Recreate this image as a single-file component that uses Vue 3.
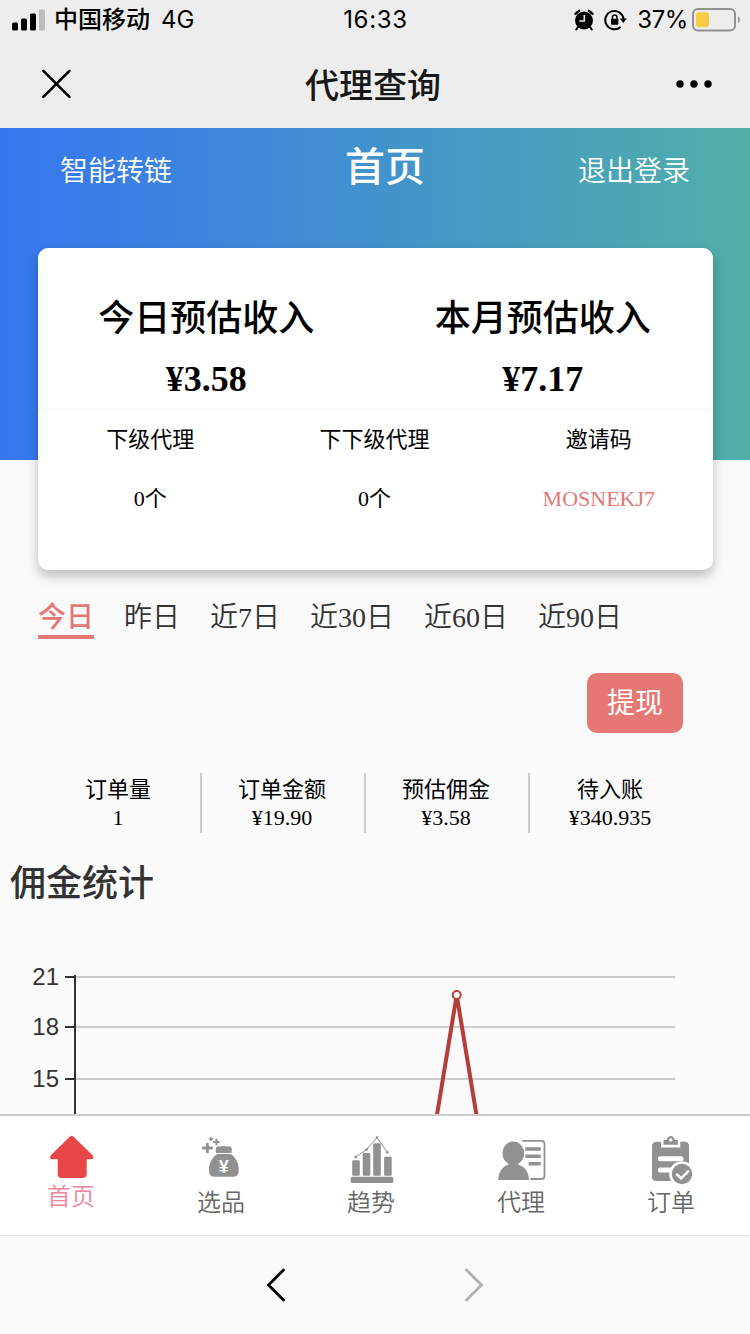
<script setup>
import { ref } from 'vue'

// income card
const income = ref([
  { name: '今日预估收入', value: '¥3.58' },
  { name: '本月预估收入', value: '¥7.17' }
])
const agents = ref([
  { name: '下级代理', value: '0个' },
  { name: '下下级代理', value: '0个' },
  { name: '邀请码', value: 'MOSNEKJ7', code: true }
])

// periods
const periods = ['今日', '昨日', '近7日', '近30日', '近60日', '近90日']
const selectedPeriod = ref('今日')

const stats = ref([
  { name: '订单量', value: '1' },
  { name: '订单金额', value: '¥19.90' },
  { name: '预估佣金', value: '¥3.58' },
  { name: '待入账', value: '¥340.935' }
])

// chart axis
const ticks = [
  { label: '21', y: 37 },
  { label: '18', y: 87 },
  { label: '15', y: 139 }
]

const tabs = [
  { key: 'home', name: '首页' },
  { key: 'goods', name: '选品' },
  { key: 'trend', name: '趋势' },
  { key: 'agent', name: '代理' },
  { key: 'order', name: '订单' }
]
const selectedTab = ref('home')
</script>

<template>
  <div class="page">
    <div class="status-bar">
      <div class="status-left">
        <svg class="signal" width="34" height="22" viewBox="0 0 34 22">
          <rect x="0" y="13.5" width="6" height="8" rx="1.6" />
          <rect x="9" y="9.5" width="6" height="12" rx="1.6" />
          <rect x="18" y="4.5" width="6" height="17" rx="1.6" />
          <rect x="27" y="0.5" width="6" height="21" rx="1.6" fill="#bcbcbc" />
        </svg>
        <span class="carrier">中国移动</span>
        <span>4G</span>
      </div>
      <span class="time">16:33</span>
      <div class="status-right">
        <svg class="alarm" width="20" height="22" viewBox="0 0 20 22">
          <circle cx="10" cy="11.5" r="9" />
          <path d="M1.4 4.8L5 1.8M18.6 4.8L15 1.8" stroke="#000" stroke-width="2.4" stroke-linecap="round" />
          <path d="M4 18L2.2 20.5M16 18l1.8 2.5" stroke="#000" stroke-width="2" stroke-linecap="round" />
          <path d="M10.3 6v6H5.2" fill="none" stroke="#ededed" stroke-width="1.6" />
        </svg>
        <svg class="lock" width="24" height="22" viewBox="0 0 24 22">
          <path d="M16.6 18A9.2 9.2 0 1 1 19.6 10" fill="none" stroke="#000" stroke-width="2" />
          <path d="M15.8 9.6h7L19.3 14z" />
          <rect x="7" y="9.8" width="7.4" height="6" rx="0.8" />
          <path d="M8.4 10V8.2a2.3 2.3 0 0 1 4.6 0V10" fill="none" stroke="#000" stroke-width="1.5" />
        </svg>
        <span class="percent">37%</span>
        <svg width="50" height="24" viewBox="0 0 50 24">
          <rect x="1" y="1" width="42" height="21.4" rx="5" fill="none" stroke="#919191" stroke-width="2" />
          <rect x="4" y="4.2" width="13" height="15" rx="2.4" fill="#f7cd45" />
          <path d="M46 8.4c2.4 1 2.4 5.6 0 6.6z" fill="#919191" />
        </svg>
      </div>
    </div>

    <div class="nav-bar">
      <svg class="close" width="30" height="30" viewBox="0 0 30 30">
        <path d="M2.400 1.800l26 26M28.400 1.800l-26 26" fill="none" stroke="#000" stroke-width="2.6" stroke-linecap="round" />
      </svg>
      <span class="nav-title">代理查询</span>
      <svg class="more" width="36" height="8" viewBox="0 0 36 8">
        <circle cx="4" cy="4" r="3.7" />
        <circle cx="18" cy="4" r="3.7" />
        <circle cx="32" cy="4" r="3.7" />
      </svg>
    </div>

    <div class="content">
      <div class="header">
        <span class="link">智能转链</span>
        <span class="title">首页</span>
        <span class="link">退出登录</span>
      </div>

      <div class="card">
        <div class="income-row">
          <div v-for="item in income" :key="item.name" class="income">
            <p>{{ item.name }}</p>
            <p class="money">{{ item.value }}</p>
          </div>
        </div>
        <div class="agent-row">
          <div v-for="item in agents" :key="item.name" class="agent">
            <p>{{ item.name }}</p>
            <p :class="{ code: item.code }">{{ item.value }}</p>
          </div>
        </div>
      </div>

      <div class="periods">
        <span
          v-for="period in periods"
          :key="period"
          :class="{ active: period === selectedPeriod }"
          @click="selectedPeriod = period"
        >{{ period }}</span>
      </div>

      <div class="withdraw-row">
        <button class="withdraw">提现</button>
      </div>

      <div class="stats">
        <div v-for="item in stats" :key="item.name" class="stat">
          <p>{{ item.name }}</p>
          <p>{{ item.value }}</p>
        </div>
      </div>

      <h2 class="chart-title">佣金统计</h2>
      <svg class="chart" width="750" height="420" viewBox="0 0 750 420">
        <g v-for="tick in ticks" :key="tick.label">
          <line x1="76" x2="675" :y1="tick.y" :y2="tick.y" stroke="#ccc" stroke-width="2" />
          <line x1="65" x2="75" :y1="tick.y" :y2="tick.y" stroke="#333" stroke-width="2" />
          <text x="59" :y="tick.y + 8" text-anchor="end">{{ tick.label }}</text>
        </g>
        <line x1="75" x2="75" y1="35" y2="397" stroke="#333" stroke-width="2" />
        <path d="M400.500 397L456.700 55L513 397" fill="none" stroke="#b43f39" stroke-width="4" stroke-linejoin="bevel" />
        <circle cx="456.7" cy="55" r="4" fill="#fff" stroke="#b43f39" stroke-width="2" />
      </svg>
    </div>

    <div class="tab-bar">
      <div
        v-for="tab in tabs"
        :key="tab.key"
        class="tab"
        :class="{ active: tab.key === selectedTab }"
        @click="selectedTab = tab.key"
      >
        <svg v-if="tab.key === 'home'" width="48" height="42" viewBox="0 0 48 42">
          <path d="M23 .5q1.7-1.3 3.4 0L45.6 19.3q2 3.900-1.600 3.900H39.700V38q0 4-4 4H14.700q-4 0-4-4V23.200H5.400q-3.600 0-1.600-3.900z" />
        </svg>
        <svg v-else-if="tab.key === 'goods'" width="48" height="48" viewBox="0 0 48 48">
          <path d="M10.4 7v10M5.100 12h10.600" stroke-width="2.8" />
          <path d="M19.4 2.700v6.600M16.100 6h6.600" stroke-width="2" />
          <path d="M14 1v4M12 3h4" stroke-width="1.5" />
          <path d="M19.200 11.300q2.500-1.600 4.300-.6q3.300-1.600 6.600 0q2.400-1 4.300.8q1.200 3 0 5.600H19.200q-1.200-3 0-5.800z" class="fill" />
          <path d="M20.500 18h13c4.500 2.500 8.400 9 8.200 15.500c0 5-1.700 7.200-5.200 7.200H17.200c-3.500 0-5.200-2.200-5.200-7.200c-.2-6.500 4-13 8.500-15.500z" class="fill" />
          <text x="26.8" y="37" text-anchor="middle" class="yen">¥</text>
        </svg>
        <svg v-else-if="tab.key === 'trend'" width="48" height="48" viewBox="0 0 48 48">
          <g class="fill">
            <rect x="5.2" y="24.3" width="7.6" height="15.5" rx="1.2" />
            <rect x="15.7" y="17" width="7.6" height="22.8" rx="1.2" />
            <rect x="26.2" y="7.3" width="7.6" height="32.5" rx="1.2" />
            <rect x="37.1" y="20.7" width="7.6" height="19.1" rx="1.2" />
            <rect x="3.7" y="40.7" width="42.6" height="6.3" rx="1.5" />
            <circle cx="8.7" cy="21" r="1.4" />
            <circle cx="19.6" cy="13.6" r="1.4" />
            <circle cx="30" cy="1.7" r="1.4" />
            <circle cx="40.3" cy="16.3" r="1.4" />
          </g>
          <path d="M8.7 21L19.6 13.6L30 1.7L40.3 16.3" stroke-width="1" />
        </svg>
        <svg v-else-if="tab.key === 'agent'" width="48" height="48" viewBox="0 0 48 48">
          <path d="M25.3 4.9H44.5q3 0 3 3V40q0 3-3 3H33.3" stroke-width="1.8" />
          <path d="M28.3 13h15.4M28.3 20.3h15.4M31.700 27.700h12" stroke-width="3.5" />
          <ellipse cx="16.3" cy="17.2" rx="10.8" ry="11.6" class="fill" />
          <path d="M11.5 26h9.700v2.400C28 30.500 31.800 36 32 44H1.300C1.500 36 5 30.500 11.500 28.400z" class="fill" />
        </svg>
        <svg v-else width="48" height="48" viewBox="0 0 48 48">
          <path d="M9.5 5.7H14v5.700H33.300V5.700h4.200q4.500 0 4.500 4.500V45H9.500Q5 45 5 40.500V10.200q0-4.500 4.500-4.500z" class="fill" />
          <path d="M16.6 4H19.700C20.500-1.200 27-1.200 27.800 4h3v4.700H16.600z" class="fill" />
          <circle cx="23.7" cy="4" r="1.7" fill="#fff" />
          <path d="M13.4 22.7H34M13.400 34H25" class="line" />
          <circle cx="35" cy="38" r="12.8" fill="#fff" />
          <circle cx="35" cy="38" r="10.2" class="fill" />
          <path d="M29.9 38.5l4.200 3.900l7-7" class="check" />
        </svg>
        <span>{{ tab.name }}</span>
      </div>
    </div>

    <div class="tool-bar">
      <svg width="20" height="36" viewBox="0 0 20 36">
        <path d="M17.5 3L2.5 18L17.5 33" fill="none" stroke="#000" stroke-width="2.8" stroke-linecap="round" />
      </svg>
      <svg width="20" height="36" viewBox="0 0 20 36">
        <path d="M2.5 3L17.5 18L2.5 33" fill="none" stroke="#b0b0b0" stroke-width="2.8" stroke-linecap="round" />
      </svg>
    </div>
  </div>
</template>

<style>
body {
  margin: 0;
  background-color: #fafafa;
}
</style>

<style scoped>
.page {
  display: flex;
  flex-direction: column;
  width: 750px;
  height: 1334px;
  overflow: hidden;
  background-color: #fafafa;
  font-family: "Liberation Serif", "Noto Sans CJK SC", serif;
}

p,
h2 {
  margin: 0;
}

svg {
  display: block;
  flex-shrink: 0;
}

/* status bar */
.status-bar {
  display: grid;
  grid-template-columns: 1fr auto 1fr;
  align-items: center;
  flex-shrink: 0;
  height: 40px;
  padding: 0 8px 0 12px;
  box-sizing: border-box;
  background-color: #ededed;
  color: #000;
  font-family: Inter, "Noto Sans CJK SC", sans-serif;
  font-size: 24px;
  line-height: 40px;
}

.status-left,
.status-right {
  display: flex;
  align-items: center;
}

.status-right {
  justify-content: flex-end;
}

.carrier {
  margin-left: 8px;
  margin-right: 11px;
  font-weight: 500;
}

.time {
  margin-right: 3px;
  letter-spacing: 0.7px;
}

.alarm {
  margin-right: 10px;
}

.lock {
  margin-right: 9px;
}

.percent {
  margin-right: 4px;
  letter-spacing: -0.4px;
}

/* wechat title bar */
.nav-bar {
  display: grid;
  grid-template-columns: 1fr auto 1fr;
  align-items: center;
  flex-shrink: 0;
  height: 88px;
  padding: 0 38px 0 41px;
  box-sizing: border-box;
  background-color: #ededed;
}

.nav-title {
  margin-right: 7px;
  color: #181818;
  font-family: "Noto Sans CJK SC", sans-serif;
  font-size: 34px;
  font-weight: 500;
  line-height: 84px;
}

.more {
  justify-self: end;
}

.content {
  flex: 1;
  min-height: 0;
  overflow: hidden;
  background: linear-gradient(to right, #3776f0, #4292cc 50%, #50b0a8) no-repeat;
  background-size: 100% 332px;
}

.header {
  display: flex;
  justify-content: space-between;
  height: 120px;
  padding: 0 60px;
  color: #fff;
}

.link {
  font-size: 28px;
  font-weight: 350;
  line-height: 87px;
}

.title {
  margin-left: 20px;
  font-size: 40px;
  font-weight: 500;
  line-height: 79px;
}

.card {
  width: 675px;
  height: 322px;
  margin-left: 38px;
  border-radius: 10px;
  background-color: #fff;
  box-shadow: 0 6px 12px rgba(0, 0, 0, 0.25);
}

.income-row {
  display: flex;
  height: 162px;
  padding: 41px 2px 0 0;
  box-sizing: border-box;
  border-bottom: 2px solid #fafafa;
}

.income {
  flex: 1;
  text-align: center;
  font-size: 36px;
  font-weight: 500;
  line-height: 60px;
}

.money {
  font-weight: bold;
}

.agent-row {
  display: flex;
  padding-right: 2px;
}

.agent {
  flex: 1;
  text-align: center;
  font-size: 22px;
  line-height: 59px;
}

.code {
  color: #e57775;
}

.periods {
  display: flex;
  gap: 30px;
  margin: 30px 0 0 38px;
  color: #333;
  font-size: 28px;
  font-weight: 350;
  line-height: 35px;
}

.periods .active {
  border-bottom: 4px solid #e57775;
  color: #e57775;
  font-weight: 500;
}

.withdraw-row {
  display: flex;
  justify-content: flex-end;
  margin: 34px 67px 0 0;
}

.withdraw {
  width: 96px;
  height: 60px;
  padding: 0 0 4px;
  border: none;
  border-radius: 10px;
  background-color: #e57775;
  color: #fff;
  font-family: inherit;
  font-size: 28px;
}

.stats {
  display: flex;
  margin: 40px 0 0 38px;
}

.stat {
  width: 164px;
  height: 60px;
  padding: 3px 2px 0 0;
  box-sizing: border-box;
  border-right: 2px solid #ccc;
  text-align: center;
  font-size: 22px;
  line-height: 28px;
}

.stat:last-child {
  border-right-color: transparent;
}

.chart-title {
  height: 107px;
  padding-left: 10px;
  color: #333;
  font-size: 36px;
  font-weight: 500;
  line-height: 103px;
}

.chart text {
  fill: #333;
  font-family: "Liberation Sans", sans-serif;
  font-size: 24px;
}

/* bottom tabs */
.tab-bar {
  display: flex;
  flex-shrink: 0;
  height: 121px;
  box-sizing: border-box;
  border-top: 2px solid #ccc;
  background-color: #fff;
}

.tab {
  display: flex;
  flex-direction: column;
  align-items: center;
  width: 150px;
  padding: 20px 8px 0 0;
  box-sizing: border-box;
  color: #666;
  font-size: 24px;
  font-weight: 350;
  line-height: 38px;
}

.tab.active {
  color: #f2849a;
}

.tab svg {
  overflow: visible;
}

.tab path {
  stroke: #919191;
  fill: none;
}

.tab.active path {
  stroke: none;
  fill: #e64747;
}

.tab .fill {
  fill: #919191;
  stroke: none;
}

.tab .yen {
  fill: #fff;
  font-family: "Liberation Sans", sans-serif;
  font-size: 18px;
  font-weight: bold;
}

.tab .line {
  stroke: #fff;
  stroke-width: 5;
  stroke-linecap: round;
}

.tab .check {
  stroke: #fff;
  stroke-width: 2.6;
  stroke-linecap: round;
}

.tool-bar {
  display: flex;
  justify-content: center;
  gap: 178px;
  flex-shrink: 0;
  height: 99px;
  padding-top: 31px;
  box-sizing: border-box;
  border-top: 1px solid #e2e2e2;
  background-color: #fafafa;
}
</style>
